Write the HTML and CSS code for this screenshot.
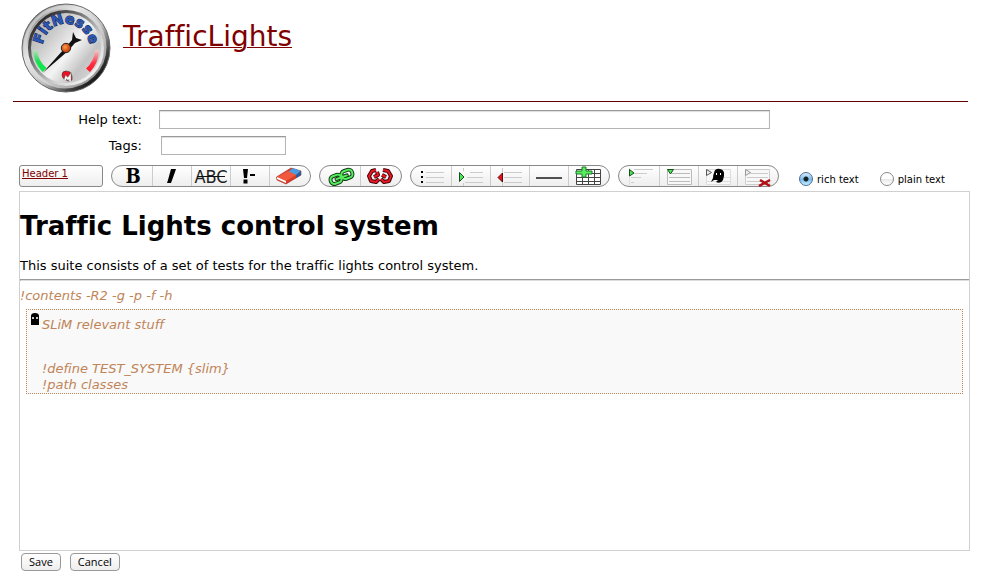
FILE: index.html
```html
<!DOCTYPE html>
<html lang="en">
<head>
<meta charset="utf-8">
<title>TrafficLights</title>
<link rel="stylesheet" href="styles.css">
</head>
<body>
<header class="page-header">
  <svg class="logo" viewBox="0 0 90 90" role="img" aria-label="FitNesse">
    <defs>
      <linearGradient id="rim" x1="0.1" y1="0.1" x2="0.9" y2="0.9">
        <stop offset="0" stop-color="#555"/><stop offset="0.12" stop-color="#aaa"/><stop offset="0.3" stop-color="#eee"/>
        <stop offset="0.6" stop-color="#bbb"/><stop offset="0.82" stop-color="#444"/><stop offset="1" stop-color="#000"/>
      </linearGradient>
      <linearGradient id="bezel" x1="0" y1="0.1" x2="0.9" y2="1">
        <stop offset="0" stop-color="#111"/><stop offset="0.3" stop-color="#666"/><stop offset="0.65" stop-color="#ccc"/><stop offset="1" stop-color="#fff"/>
      </linearGradient>
      <linearGradient id="face" x1="0" y1="0.1" x2="1" y2="0.9">
        <stop offset="0" stop-color="#aaa"/><stop offset="0.3" stop-color="#ccc"/><stop offset="0.55" stop-color="#f4f4f4"/><stop offset="0.75" stop-color="#c4c4c4"/><stop offset="1" stop-color="#ddd"/>
      </linearGradient>
      <linearGradient id="go" x1="0" y1="0" x2="0" y2="1"><stop offset="0" stop-color="#bdb"/><stop offset="0.5" stop-color="#2d5"/><stop offset="1" stop-color="#0e4"/></linearGradient>
      <linearGradient id="stop" x1="0" y1="0" x2="0" y2="1"><stop offset="0" stop-color="#ecc"/><stop offset="0.6" stop-color="#f34"/><stop offset="1" stop-color="#f12"/></linearGradient>
      <radialGradient id="hub" cx="0.4" cy="0.4"><stop offset="0" stop-color="#ff9a50"/><stop offset="1" stop-color="#c8440a"/></radialGradient>
      <path id="word" d="M22 49A23.5 23.5 0 1 1 68 49"/>
    </defs>
    <circle cx="45" cy="45" r="44" fill="url(#rim)" stroke="#666"/>
    <circle cx="44" cy="44" r="40" fill="none" stroke="#ddd" stroke-width="3" opacity=".65"/>
    <circle cx="45" cy="45" r="36.5" fill="url(#face)" stroke="url(#bezel)" stroke-width="3"/>
    <path d="M12 47A33 33 0 0 0 21.5 69L25.5 65A27 27 0 0 1 16 47Z" fill="url(#go)"/>
    <path d="M78 47A33 33 0 0 1 69 69L65 65.5A27 27 0 0 0 74 47Z" fill="url(#stop)"/>
    <text class="logo-word"><textPath href="#word" startOffset="50%" text-anchor="middle">FitNesse</textPath></text>
    <path d="M21.5 70L43 46L51 37L52 29L55 35L61 37L54 40L47 48Z" fill="#111"/>
    <circle cx="45" cy="45" r="4.7" fill="url(#hub)" stroke="#222"/>
    <path d="M41 72Q41 68 45 68L49 69 51 73 51 77 47 78 42 75Z" fill="#e12" stroke="#333" stroke-width=".6"/>
    <path d="M44 77L45 74L47 76L49 73V78" fill="none" stroke="#777" stroke-width="2.6"/>
    <path d="M44 77L45 74L47 76L49 73V78" fill="none" stroke="#fff" stroke-width="1.5"/>
  </svg>
  <h1 class="page-title"><a href="#">TrafficLights</a></h1>
</header>
<form class="edit-form">
  <div class="field"><label for="help">Help text:</label><input class="help-input" id="help" type="text"></div>
  <div class="field tags"><label for="tags">Tags:</label><input class="tags-input" id="tags" type="text"></div>
  <div class="toolbar">
    <a class="style-picker" href="#">Header 1</a>
    <div class="group">
      <button type="button" aria-label="Bold"><svg viewBox="0 0 30 20"><text class="glyph bold" x="15" y="17">B</text></svg></button>
      <button type="button" aria-label="Italic"><svg viewBox="0 0 30 20"><path d="M14 3h5l-1 3-4 11H10l1-3Z"/></svg></button>
      <button type="button" aria-label="Strike"><svg viewBox="0 0 30 20"><text class="glyph strike" x="15" y="17">ABC</text><path d="M1 10.500H29" stroke="#111"/></svg></button>
      <button type="button" aria-label="Escape"><svg viewBox="0 0 30 20"><path d="M8 3h5l-1 9H9ZM8.500 13.500h4v4h-4ZM15 8h5v2h-5Z"/></svg></button>
      <button type="button" aria-label="Remove format"><svg viewBox="0 0 30 20"><path d="M2.500 11L17 2l10 3v4L12 18l-9-4Z" fill="#d83c28" stroke="#a42318" stroke-width=".6"/><path d="M19 2l8 3-5 4-8-3Z" fill="#4a9be0"/><path d="M27 5v4l-5 3V9Z" fill="#245f9e"/><path d="M3 11L14 5l8 4-10 6Z" fill="#f0593e"/><path d="M3 11l9 4v2l-9-4Z" fill="#fff"/></svg></button>
    </div>
    <div class="group">
      <button type="button" aria-label="Link"><svg viewBox="0 0 30 20"><g transform="rotate(-20 15 11)" fill="none"><g stroke="#153c18" stroke-width="4"><rect x="4" y="7.500" width="11" height="8" rx="3.500"/><rect x="16" y="6.500" width="11" height="8" rx="3.500"/><path d="M10 11.500H21" stroke-linecap="round"/></g><g stroke="#55ef5d" stroke-width="2"><rect x="4" y="7.500" width="11" height="8" rx="3.500"/><rect x="16" y="6.500" width="11" height="8" rx="3.500"/><path d="M10 11.500H21" stroke-linecap="round"/></g></g></svg></button>
      <button type="button" aria-label="Unlink"><svg viewBox="0 0 30 20"><g fill="none" stroke-linejoin="round"><path d="M11 4L7 5 4 10 6 15 11 16 14 13M9 11L13 9 12 6M18 4L23 5 26 10 24 15 19 16 16 13M21 11L17 9" stroke="#400508" stroke-width="4"/><path d="M11 4L7 5 4 10 6 15 11 16 14 13M9 11L13 9 12 6M18 4L23 5 26 10 24 15 19 16 16 13M21 11L17 9" stroke="#ec1724" stroke-width="2"/></g></svg></button>
    </div>
    <div class="group">
      <button type="button" aria-label="List"><svg viewBox="0 0 30 20"><path d="M4 5h2v2H4ZM4 10h2v2H4ZM4 15h2v2H4Z"/><path d="M9 6.500H27M9 11.500H27M9 16.500H27" stroke="#ccc"/></svg></button>
      <button type="button" aria-label="Indent"><svg viewBox="0 0 30 20"><path d="M7.500 2v3M7.500 17v3M14 6.500H27M11 11.500H27M9 16.500H27" stroke="#ccc"/><path d="M3.500 6.500L8 11 3.500 15.500Z" fill="#4ee45a" stroke="#174f1c"/></svg></button>
      <button type="button" aria-label="Outdent"><svg viewBox="0 0 30 20"><path d="M7.500 2v18M9 6.500H27M9 11.500H27M9 16.500H27" stroke="#ccc"/><path d="M7.500 7v9L3 11.500Z" fill="#e8101c" stroke="#5c080c"/></svg></button>
      <button type="button" aria-label="Horizontal line"><svg viewBox="0 0 30 20"><path d="M2 12H28" stroke="#505050" stroke-width="2"/></svg></button>
      <button type="button" aria-label="Table"><svg viewBox="0 0 30 20"><path d="M3.500 3.500h24v15h-24ZM3 7.500h24M3 11.500h24M3 15.500h24M9.500 3v16M15.500 3v16M21.500 3v16" fill="#fff" stroke="#444"/><path d="M9 1h4v4h6v3h-6v3h-4V8H3V5h6Z" fill="#55ef5d" stroke="#23762b"/></svg></button>
    </div>
    <div class="group">
      <button type="button" aria-label="Section"><svg viewBox="0 0 30 20"><path d="M9 3.500H28M9 7.500H22M6 11.500H16M6 16.500H9" stroke="#ccc"/><path d="M4.500 2V19" stroke="#ddd"/><path d="M4.500 3.500L9 7 4.500 10Z" fill="#4ee45a" stroke="#174f1c"/></svg></button>
      <button type="button" aria-label="Collapsible"><svg viewBox="0 0 30 20"><path d="M3.500 3.500h24v15h-24ZM8 7.500h18M5 11.500h21M5 15.500h21" fill="#f8f8f8" stroke="#bbb"/><path d="M3.500 3.500h6L6.500 8Z" fill="#4ee45a" stroke="#174f1c"/></svg></button>
      <button type="button" aria-label="Hidden section"><svg viewBox="0 0 30 20"><path d="M3.500 3.500h24v15h-24ZM19 11.500h8M4 15.500h23" fill="#f8f8f8" stroke="#ddd"/><path d="M3.500 3.500l5 3-5 3Z" fill="#eee" stroke="#555"/><path d="M11 7Q12 2 17 3T21 10L20 14Q18 18 13 16L15 14L11 14 8 16 10 12Q10 9 11 7Z"/><path d="M13 7h1v2h-1ZM17 7h1v2h-1Z" fill="#fff"/></svg></button>
      <button type="button" aria-label="Remove section"><svg viewBox="0 0 30 20"><path d="M3.500 3.500h24v15h-24ZM8 7.500h18M5 11.500h21M5 15.500h21" fill="#f8f8f8" stroke="#ccc"/><path d="M3.500 3.500l5 3-5 3Z" fill="#eee" stroke="#999"/><path d="M18 14l10 6M28 14L17 20" stroke="#b01018" stroke-width="2.500"/></svg></button>
    </div>
    <div class="modes">
      <label><input type="radio" name="mode" checked>rich text</label>
      <label><input type="radio" name="mode">plain text</label>
    </div>
  </div>
  <div class="editor">
    <h2>Traffic Lights control system</h2>
    <p>This suite consists of a set of tests for the traffic lights control system.</p>
    <hr>
    <p class="macro">!contents -R2 -g -p -f -h</p>
    <section class="hidden-block macro">
      <svg class="ghost" viewBox="0 0 8 12"><path d="M0 12V3Q0 0 4 0T8 3V12Z"/><path d="M1 4h2v2H1ZM5 4h2v2H5Z" fill="#ccc"/></svg>
      <div>
        <p class="block-title">SLiM relevant stuff</p>
        <p>!define TEST_SYSTEM {slim}</p>
        <p>!path classes</p>
      </div>
    </section>
  </div>
  <div class="actions"><button type="submit">Save</button><button type="button">Cancel</button></div>
</form>
</body>
</html>
```
FILE: styles.css
```css
* { box-sizing: border-box; }
body {
  margin: 0;
  background: #fff;
  color: #000;
  font: 13px/16px Verdana, "DejaVu Sans", sans-serif;
  font-variant-ligatures: none;
}
h1, h2, p { margin: 0; }
.page-header {
  display: flex;
  gap: 12px;
  margin: 0 19px 0 13px;
  padding: 3px 0 8px 8px;
  border-bottom: 1px solid #600000;
}
.logo { flex: none; width: 90px; height: 90px; }
.logo-word {
  font: bold 14px "DejaVu Sans", sans-serif;
  fill: #2b56b4;
  stroke: #10204c;
  stroke-width: 1px;
  paint-order: stroke;
}
.page-title { padding-top: 16px; font-size: 28px; line-height: 36px; font-weight: normal; }
.page-title a, .style-picker { color: #800000; text-decoration: underline; }
.page-title a { text-decoration-thickness: 1px; text-underline-offset: 1px; }
.edit-form { margin: 0 17px 0 19px; padding-top: 8px; }
.field { display: flex; align-items: center; gap: 17px; margin-bottom: 7px; }
.field.tags { gap: 19px; margin-bottom: 10px; }
.field label { flex: none; width: 123px; text-align: right; }
.field input {
  min-width: 0;
  height: 19px;
  padding: 0 2px;
  border: 1px solid #b4b4b4;
  border-top-color: #999;
  box-shadow: inset 0 1px 1px #ddd;
}
.help-input { flex: 0 1 611px; }
.tags-input { flex: 0 1 125px; }
.toolbar { display: flex; gap: 8px; margin-bottom: 4px; }
.style-picker {
  flex: none;
  width: 84px;
  height: 22px;
  padding-left: 2px;
  border: 1px solid #888;
  border-radius: 3px;
  background: linear-gradient(#fff, #eee);
  font-size: 10px;
  line-height: 15px;
}
.group {
  display: flex;
  flex: none;
  height: 22px;
  border: 1px solid #888;
  border-radius: 11px;
  background: linear-gradient(#fff, #eee);
}
.group button {
  width: 39px;
  padding: 0;
  border: 0;
  border-right: 1px solid #ccc;
  background: none;
}
.group button:first-child { width: 41px; padding-left: 2px; }
.group button:last-child { width: 40px; padding-right: 2px; border-right: 0; }
.group svg { display: block; width: 30px; height: 20px; margin: 0 auto; overflow: visible; }
.glyph { text-anchor: middle; }
.bold { font: bold 20px "DejaVu Serif Condensed", "DejaVu Serif", serif; }
.strike { font: 18px "Liberation Sans Narrow", "DejaVu Sans Condensed", sans-serif; fill: #222; }
.modes { display: flex; gap: 21px; margin-left: 12px; padding-top: 7px; font-size: 10px; line-height: 15px; white-space: nowrap; }
.modes label { display: flex; gap: 4px; }
.modes input {
  appearance: none;
  width: 14px;
  height: 14px;
  margin: 0;
  border: 1px solid #888;
  border-radius: 50%;
  background: linear-gradient(#fff 50%, #e8e8e8 50%, #fff);
}
.modes input:checked {
  border-color: #4a6c94;
  background: radial-gradient(circle, #122 2px, transparent 3px), linear-gradient(#d8ecfb, #7db9ec 55%, #c8f0ff);
}
.editor { min-height: 360px; border: 1px solid #d0d0d0; }
.editor h2 { padding: 17px 0 15px; font-size: 26px; line-height: 34px; }
.editor hr { margin: 5px 0 7px; border: solid #999; border-width: 1px 0 0 1px; height: 2px; border-bottom: 1px solid #ddd; }
.macro { color: #c08457; font-style: italic; }
.hidden-block {
  display: flex;
  gap: 3px;
  margin: 5px 6px 0;
  padding: 3px 4px 0;
  border: 1px dotted #c08457;
  background: #f9f9f9;
}
.ghost { flex: none; width: 8px; height: 12px; }
.block-title { padding: 4px 0 28px; }
.actions { display: flex; gap: 9px; padding: 2px; }
.actions button {
  height: 18px;
  padding: 0 7px;
  border: 1px solid #999;
  border-radius: 4px;
  background: linear-gradient(#fff, #eee);
  color: #000;
  font: 11px/16px "Lucida Grande", "Open Sans", sans-serif;
}
```
